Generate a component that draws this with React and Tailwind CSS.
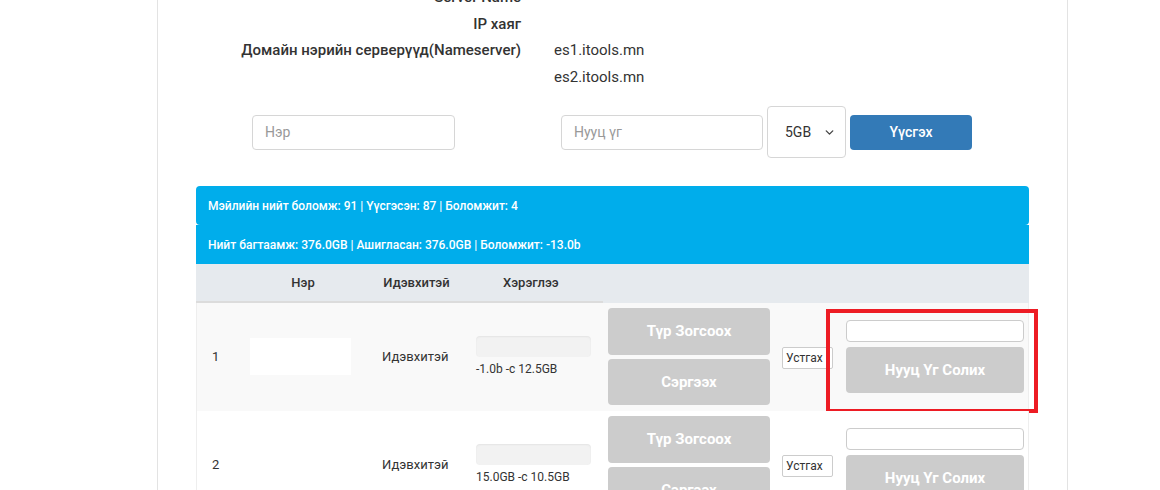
import { ChevronDown } from 'lucide-react';

const ROWS = [
  { n: 1, usage: '-1.0b -c 12.5GB', striped: true, marked: true },
  { n: 2, usage: '15.0GB -c 10.5GB', striped: false, marked: false },
];

const COLS = 'grid grid-cols-[44px_126px_103px_134px_172px_64px_189px]';

function InfoRow({ label, value }) {
  return (
    <div className="flex leading-[26.5px] text-[15px]">
      <div className="w-[363px] shrink-0 text-right font-medium text-[#333]">{label}</div>
      <div className="ml-[33px] text-[#333]">{value}</div>
    </div>
  );
}

function Row({ n, usage, striped, marked }) {
  return (
    <div className={`relative ${COLS} items-center border-x border-[#eeeeee] ${striped ? 'bg-[#f9f9f9]' : 'bg-white'} pt-[5px] pb-[6px]`}>
      <div className="pl-[15px] text-[13px] text-[#333]">{n}</div>
      <div className="pl-[9px]">
        <div className="h-[37px] w-[101px] bg-white" />
      </div>
      <div className="pl-[15px] text-[13px] text-[#333]">Идэвхитэй</div>
      <div className="px-[6px]">
        <div className="h-[21px] w-[115px] rounded-[4px] bg-[#f2f2f2] shadow-[inset_0_1px_2px_rgba(0,0,0,0.06)]" />
        <div className="mt-[4px] text-[12px] leading-[16px] text-[#333]">{usage}</div>
      </div>
      <div className="flex flex-col gap-[4px] pl-[4px]">
        <button className="h-[47px] w-[162px] rounded-[4px] bg-[#cccccc] text-[15px] font-bold text-white">Түр Зогсоох</button>
        <button className="h-[46px] w-[162px] rounded-[4px] bg-[#cccccc] text-[15px] font-bold text-white">Сэргээх</button>
      </div>
      <div className="pl-[6px]">
        <button className="h-[22px] w-[51px] overflow-hidden whitespace-nowrap rounded-[2px] border border-[#cccccc] bg-white px-[3px] text-left text-[12px] text-[#333]">Устгах</button>
      </div>
      <div className="flex flex-col gap-[5px] pl-[6px] pr-[5px]">
        <input className="h-[22px] w-[178px] rounded-[4px] border border-[#cccccc] bg-white" />
        <button className="h-[46px] w-[178px] rounded-[4px] bg-[#cccccc] text-[15px] font-bold text-white">Нууц Үг Солих</button>
      </div>
      {marked ? (
        <div className="pointer-events-none absolute left-[629px] top-[6px] h-[104px] w-[212px] border-[4px] border-[#ed1c24]" />
      ) : null}
    </div>
  );
}

export default function App() {
  return (
    <div className="h-[490px] overflow-hidden bg-white font-['Roboto',sans-serif]">
      <div className="ml-[157px] mt-[-16px] min-h-[520px] w-[911px] border-x border-[#e3e3e3]">
        <div>
          <InfoRow label="Server Name" value="" />
          <InfoRow label="IP хаяг" value="" />
          <InfoRow label="Домайн нэрийн серверүүд(Nameserver)" value="es1.itools.mn" />
          <InfoRow label="" value="es2.itools.mn" />
        </div>

        <div className="mt-[16px] flex items-center">
          <input
            placeholder="Нэр"
            className="ml-[94px] h-[35px] w-[203px] rounded-[4px] border border-[#d6d6d6] px-[12px] text-[14px] text-[#333] placeholder:text-[#999]"
          />
          <input
            placeholder="Нууц үг"
            className="ml-[106px] h-[35px] w-[202px] rounded-[4px] border border-[#d6d6d6] px-[12px] text-[14px] text-[#333] placeholder:text-[#999]"
          />
          <div className="ml-[4px] flex h-[52px] w-[79px] items-center justify-between rounded-[4px] border border-[#d6d6d6] pl-[17px] pr-[9px] text-[14px] text-[#333]">
            <span>5GB</span>
            <ChevronDown size={13} strokeWidth={2.5} className="text-[#444]" />
          </div>
          <button className="ml-[4px] h-[35px] w-[122px] rounded-[4px] bg-[#337ab7] text-[14px] font-medium text-white">Үүсгэх</button>
        </div>

        <div className="mx-[38px] mt-[28px]">
          <div className="flex h-[39px] items-center rounded-[4px] bg-[#00adeb] px-[12px] text-[12px] font-medium text-white">
            Мэйлийн нийт боломж: 91 | Үүсгэсэн: 87 | Боломжит: 4
          </div>
          <div className="flex h-[39px] items-center bg-[#00adeb] px-[12px] text-[12px] font-medium text-white">
            Нийт багтаамж: 376.0GB | Ашигласан: 376.0GB | Боломжит: -13.0b
          </div>
          <div className={`${COLS} h-[39px] items-center bg-[#e6eaee] text-[13px] font-medium text-[#333]`}>
            <div className="flex h-full items-center border-b-2 border-[#dcdcdc]" />
            <div className="flex h-full items-center justify-center border-b-2 border-[#dcdcdc]">Нэр</div>
            <div className="flex h-full items-center justify-center border-b-2 border-[#dcdcdc] pr-[2px]">Идэвхитэй</div>
            <div className="flex h-full items-center border-b-2 border-[#dcdcdc] pl-[34px]">Хэрэглээ</div>
            <div />
            <div />
            <div />
          </div>
          {ROWS.map((r) => (
            <Row key={r.n} {...r} />
          ))}
        </div>
      </div>
    </div>
  );
}
